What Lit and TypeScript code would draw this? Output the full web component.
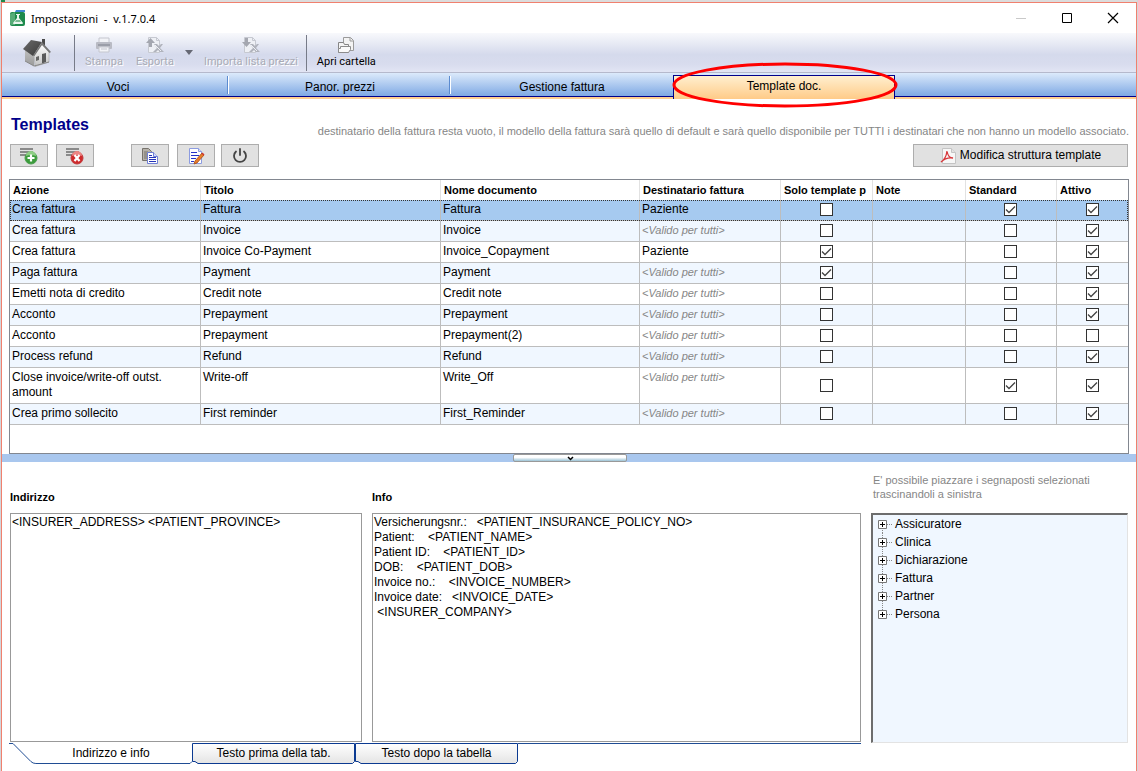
import { LitElement, html, css, svg } from "lit";
import { customElement, state } from "lit/decorators.js";

interface Row {
  action: string;
  title: string;
  doc: string;
  recipient?: string;
  only: boolean;
  standard: boolean;
  active: boolean;
}

const row = (action: string, title: string, doc: string, recipient: string, only = false, standard = false, active = true): Row =>
  ({ action, title, doc, recipient, only, standard, active });

const ROWS: Row[] = [
  row("Crea fattura", "Fattura", "Fattura", "Paziente", false, true),
  row("Crea fattura", "Invoice", "Invoice", ""),
  row("Crea fattura", "Invoice Co-Payment", "Invoice_Copayment", "Paziente", true),
  row("Paga fattura", "Payment", "Payment", "", true),
  row("Emetti nota di credito", "Credit note", "Credit note", ""),
  row("Acconto", "Prepayment", "Prepayment", ""),
  row("Acconto", "Prepayment", "Prepayment(2)", "", false, false, false),
  row("Process refund", "Refund", "Refund", ""),
  row("Close invoice/write-off outst. amount", "Write-off", "Write_Off", "", false, true),
  row("Crea primo sollecito", "First reminder", "First_Reminder", ""),
];

const INFO = [
  "Versicherungsnr.:   <PATIENT_INSURANCE_POLICY_NO>",
  "Patient:    <PATIENT_NAME>",
  "Patient ID:    <PATIENT_ID>",
  "DOB:    <PATIENT_DOB>",
  "Invoice no.:    <INVOICE_NUMBER>",
  "Invoice date:   <INVOICE_DATE>",
  " <INSURER_COMPANY>",
].join("\n");

const TABS = ["Voci", "Panor. prezzi", "Gestione fattura", "Template doc."];
const TREE = ["Assicuratore", "Clinica", "Dichiarazione", "Fattura", "Partner", "Persona"];

const appIcon = html`<svg width="16" height="16" viewBox="0 0 16 16" aria-hidden="true">
  <rect x="0" y="2" width="15" height="14" rx="2" fill="#1d8a4c"/>
  <path d="M5 2l1-2h9v2z" fill="#3f86cf"/>
  <path d="M0 4l5-2v13H2q-2 0-2-2z" fill="#56ab76"/>
  <path d="M6 4h4v1H9v3l4 5q0 1-1 1H4q-1 0-1-1l4-5V5H6z" fill="#e9f5ed"/>
  <path d="M6 10h4l1 2H5z" fill="#7dbb93"/>
</svg>`;

const house = html`<svg width="28" height="28" viewBox="0 0 28 28" aria-hidden="true">
  <defs>
    <linearGradient id="front" x1="0" y1="0" x2="0" y2="1"><stop offset="0" stop-color="#fff"/><stop offset="1" stop-color="#c2c2c2"/></linearGradient>
    <linearGradient id="side" x1="0" y1="0" x2="0" y2="1"><stop offset="0" stop-color="#bdbdbd"/><stop offset="1" stop-color="#9a9a9a"/></linearGradient>
    <linearGradient id="roof" x1="0" y1="0" x2="1" y2="1"><stop offset="0" stop-color="#6a6a6a"/><stop offset="1" stop-color="#3a3a3a"/></linearGradient>
  </defs>
  <path d="M19 0h3v8h-3z" fill="#4a4a4a"/>
  <path d="M2 11l9 5v11l-9-5z" fill="url(#side)"/>
  <path d="M11 15l8-10 7 8v10l-14 4.500z" fill="url(#front)" stroke="#9a9a9a" stroke-width=".5"/>
  <path d="M0 10L8 1l11 2-9 14z" fill="url(#roof)"/>
  <path d="M19 3l9 10-1.500 1L19 6l-7.500 11H10z" fill="#777"/>
  <path d="M19 15l4-1v9l-4 1.500z" fill="#5a5a5a"/>
  <path d="M13 18l3-1v4l-3 1z" fill="#666"/>
  <path d="M2 22l9 5 15-4" fill="none" stroke="#888"/>
</svg>`;

const printer = html`<svg width="18" height="16" viewBox="0 0 18 16" aria-hidden="true">
  <path d="M4 1h10v5H4z" fill="#f2f3f7" stroke="#c4c6ce"/>
  <rect x="1" y="5" width="16" height="7" rx="1" fill="#b9bbc4"/>
  <path d="M3 8h12" stroke="#9b9ea8" stroke-width="2"/>
  <path d="M4 10h10v5H4z" fill="#f2f3f7" stroke="#c4c6ce"/>
  <path d="M6 12h6" stroke="#c4c6ce"/>
</svg>`;

const sheet = (down: boolean) => html`<svg width="18" height="16" viewBox="0 0 18 16" aria-hidden="true">
  <path d="M2.500 .5h8l3 3v12h-11z" fill="#eef0f5" stroke="#c6c9d1"/>
  <path d="M10.500 .5v3h3" fill="none" stroke="#c6c9d1"/>
  ${down
    ? svg`<path d="M3 1h3v4h3L4.500 10 0 5h3z" fill="#a4a7b0"/>`
    : svg`<path d="M3 10h3V6h3L4.500 1 0 6h3z" fill="#a4a7b0"/>`}
  <path d="M8 7h3l2 2 2-2h2l-3 4 4 4h-4l-2-2-2 2H7l4-4z" fill="#b0b3bc"/>
  <path d="M9 8l6 6" stroke="#eef0f5"/>
</svg>`;

const folder = html`<svg width="18" height="16" viewBox="0 0 18 16" aria-hidden="true">
  <path d="M6.500 .5h7l3 3v10h-10z" fill="#f3f3f3" stroke="#9a9a9a"/>
  <path d="M13 1v3h3" fill="none" stroke="#9a9a9a"/>
  <path d="M1.500 5.500h5l1 2h4v8h-10z" fill="#f4f4f4" stroke="#858585"/>
  <path d="M3.500 9.500h10v3l-2 3h-10v-4h2z" fill="#fafafa" stroke="#8c8c8c"/>
</svg>`;

const listLines = svg`<path d="M0 2h13M0 5h13M0 8h8" stroke="#8a8a8a" stroke-width="2"/>`;
const addIcon = html`<svg width="18" height="18" viewBox="0 0 18 18" aria-hidden="true">
  ${listLines}<circle cx="11" cy="11" r="6" fill="#3c9c3c" stroke="#4a9d4c"/>
  <path d="M6 9a5 5 0 0 1 10 0q-5-2-10 0" fill="#8fce86"/>
  <path d="M11 7.500v7M7.500 11h7" stroke="#fff" stroke-width="2.200"/>
</svg>`;
const deleteIcon = html`<svg width="18" height="18" viewBox="0 0 18 18" aria-hidden="true">
  ${listLines}<circle cx="11" cy="11" r="6" fill="#cf2a2c" stroke="#c0393b"/>
  <path d="M6 9a5 5 0 0 1 10 0q-5-2-10 0" fill="#ec8583"/>
  <path d="M8.500 8l5 6M13.500 8l-5 6" stroke="#fff" stroke-width="2.200"/>
</svg>`;
const copyIcon = html`<svg width="18" height="18" viewBox="0 0 18 18" aria-hidden="true">
  <path d="M1.500 1.500h6l3 3v9h-9z" fill="#b5b1a9" stroke="#77736c"/>
  <path d="M3 5h4M3 7h4M3 9h4M3 11h4" stroke="#77736c"/>
  <path d="M6.500 5.500h6l4 4v7h-10z" fill="#fff" stroke="#6f7fd4"/>
  <path d="M12.500 5.500v4h4" fill="#d8defa" stroke="#6f7fd4"/>
  <path d="M8 8.500h3M8 10.500h7M8 12.500h7M8 14.500h7" stroke="#2633b8"/>
</svg>`;
const editIcon = html`<svg width="18" height="18" viewBox="0 0 18 18" aria-hidden="true">
  <path d="M2.500 1.500h9l3 3v12h-12z" fill="#fff" stroke="#8c9be0"/>
  <path d="M11.500 1.500v3h3" fill="#d8defa" stroke="#8c9be0"/>
  <path d="M4 5.500h6M4 8.500h8M4 11.500h5M4 14.500h3" stroke="#2633c8"/>
  <path d="M15 6l2 2-7 8-3 1 1-3z" fill="#e87d2a" stroke="#a34a17" stroke-width=".8"/>
  <path d="M14.500 6.500l1-1 2 2-1 1z" fill="#c33"/>
</svg>`;
const powerIcon = html`<svg width="18" height="18" viewBox="0 0 18 18" aria-hidden="true">
  <path d="M5 4.500a6 6 0 1 0 8 0M9 2v6" fill="none" stroke="#444" stroke-width="1.800" stroke-linecap="round"/>
</svg>`;
const pdfIcon = html`<svg width="16" height="16" viewBox="0 0 16 16" aria-hidden="true">
  <path d="M2.500 .5h9l4 4v11h-13z" fill="#f7f7f7" stroke="#c4c4c4"/>
  <path d="M11.500 .5v4h4" fill="#e2e2e2" stroke="#c4c4c4"/>
  <path d="M1 14q5-3 6-11 1 7 6 7-7-1-12 4z" fill="none" stroke="#d7383c" stroke-width="1.300"/>
</svg>`;

@customElement("app-root")
export class AppRoot extends LitElement {
  @state() private rows = ROWS;
  @state() private selected = 0;

  static styles = css`
    :host {
      display: block;
      font-family: "Liberation Sans", Arial, sans-serif;
      font-size: 12px;
      line-height: 15px;
      color: #000;
    }
    *, *::before, *::after { box-sizing: border-box; }
    svg { display: block; flex: none; }
    button, textarea { font: inherit; color: inherit; margin: 0; border-radius: 0; }
    .screen {
      min-height: 100vh;
      display: flex;
      flex-direction: column;
      padding: 0 1px;
      background: #d4d6da;
    }
    .behind {
      height: 2px;
      background: linear-gradient(90deg, #1d8a4c 4px, #dcdcdc 4px);
    }
    .window {
      flex: 1;
      display: flex;
      flex-direction: column;
      background: #fff;
      border: 1px solid #f0806e;
      border-bottom: 0;
    }
    .titlebar {
      display: flex;
      align-items: center;
      height: 30px;
      padding: 0 17px 0 8px;
      gap: 5px;
      font-family: "Noto Sans", "Open Sans", sans-serif;
    }
    .titlebar h1 { flex: 1; margin: 0; font-size: 11px; font-weight: 400; white-space: pre; }
    .winbuttons { display: flex; gap: 34px; }
    .winbuttons button { border: 0; padding: 0; background: none; }
    .toolbar {
      display: flex;
      align-items: center;
      height: 40px;
      padding-left: 21px;
      background: linear-gradient(#f8f9fc, #d5daec 55%, #d8dcee 80%, #e2e5f4);
      border-bottom: 1px solid #b5b9cc;
    }
    .tool {
      display: flex;
      flex-direction: column;
      align-items: center;
      gap: 1px;
      padding: 0;
      border: 0;
      background: none;
      font-family: Roboto, sans-serif;
      font-size: 11px;
      white-space: nowrap;
    }
    .tool:disabled { color: #a9abb5; text-shadow: 1px 1px 0 #fff; }
    .sep { width: 1px; height: 36px; background: #777b88; }
    .home { margin-right: 23px; }
    .print { margin: 0 13px 0 10px; }
    .arrow { border: 0; padding: 0; background: none; margin: 0 11px; }
    .import { margin-right: 8px; }
    .open { margin-left: 10px; }
    .tabs {
      display: flex;
      height: 26px;
      padding-left: 5px;
      background: linear-gradient(#dceafb, #7fa9e4 23px, #00008b 23px, #00008b 24px, #ffcf8f 24px);
    }
    .tab {
      position: relative;
      flex: 0 1 222px;
      padding: 2px 0 0;
      border: 0;
      background: none;
    }
    .tab.divided::after {
      content: "";
      position: absolute;
      right: 0;
      top: 3px;
      height: 18px;
      width: 2px;
      background: linear-gradient(90deg, #5b8bd0 50%, #fff 50%);
    }
    .tab.active {
      margin-top: 2px;
      padding: 0 0 2px;
      border: 1px solid #00008b;
      border-bottom: 0;
      background: linear-gradient(#ffefcf, #ffcb88);
    }
    .ring {
      position: absolute;
      left: -1px;
      top: -14px;
      width: calc(100% + 4px);
      height: 46px;
      overflow: visible;
      pointer-events: none;
    }
    .main { display: flex; flex-direction: column; padding: 17px 7px 0; }
    .heading { display: flex; justify-content: space-between; gap: 16px; padding-left: 2px; }
    .heading h2 { margin: 0; font-size: 16px; line-height: 18px; color: #00008b; }
    .hint { margin: 0; font-size: 11px; line-height: 14px; color: #868686; }
    .heading .hint { padding-top: 8px; white-space: nowrap; }
    .actions { display: flex; padding: 6px 1px 12px; align-items: center; }
    .actions button {
      display: flex;
      align-items: center;
      justify-content: center;
      gap: 4px;
      height: 23px;
      width: 38px;
      padding: 0;
      border: 1px solid #adadad;
      background: #e1e1e1;
    }
    .actions .gap-s { margin-left: 8px; }
    .actions .gap-m { margin-left: 37px; }
    .actions .gap-t { margin-left: 6px; }
    .actions .wide { width: 215px; margin-left: auto; }
    .gridbox { border: 1px solid #828790; padding-bottom: 28px; }
    table { width: 100%; border-collapse: separate; border-spacing: 0; table-layout: fixed; }
    th {
      height: 20px;
      padding: 0 3px;
      text-align: left;
      font-size: 11px;
      border-right: 1px solid #e2e2e2;
      white-space: nowrap;
    }
    td {
      padding: 2px;
      padding-bottom: 3px;
      vertical-align: top;
      border-right: 1px solid #bdbdbd;
      border-bottom: 1px solid #bdbdbd;
    }
    th:last-child, td:last-child { border-right: 0; }
    .odd { background: #f0f7ff; }
    .picked { background: #a6caf0; outline: 1px dotted #333; outline-offset: -1px; }
    .all { color: #868686; font-size: 11px; font-style: italic; }
    .check { text-align: center; vertical-align: middle; line-height: 0; }
    .check input {
      appearance: none;
      width: 13px;
      height: 13px;
      margin: 0;
      border: 1px solid #333;
      background: #fff;
    }
    .check input:checked {
      background: url("data:image/svg+xml,%3Csvg xmlns='http://www.w3.org/2000/svg' viewBox='0 0 11 11'%3E%3Cpath d='M1 5.500l3 3 6-6' fill='none' stroke='%23444' stroke-width='1.300'/%3E%3C/svg%3E") #fff;
    }
    .splitter { display: flex; justify-content: center; height: 8px; padding-left: 2px; background: #a9c7ee; }
    .grip {
      display: flex;
      justify-content: center;
      width: 114px;
      height: 8px;
      padding: 1px 0 0;
      border: 1px solid #999;
      border-radius: 2px;
      background: linear-gradient(#fff 40%, #9cc3d6);
    }
    .lower {
      flex: 1;
      display: grid;
      grid-template-columns: 352fr 489fr 257fr;
      grid-template-rows: 51px 1fr;
      column-gap: 10px;
      padding: 0 8px;
    }
    .caption { align-self: end; padding-bottom: 8px; font-size: 11px; font-weight: 700; }
    .lower .hint { align-self: end; padding: 0 0 12px 2px; }
    textarea {
      width: 100%;
      min-height: 120px;
      padding: 1px;
      border: 1px solid #999;
      background: #fff;
      resize: none;
      outline: 0;
      display: block;
    }
    .tree {
      margin: 0 0 -1px;
      padding: 0 0 0 5px;
      list-style: none;
      background: #f0f7ff;
      border: 2px solid #6d6d6d;
      border-right: 1px solid #e3e3e3;
      border-bottom: 1px solid #e3e3e3;
    }
    .tree button { display: flex; align-items: center; gap: 3px; height: 18px; padding: 0; border: 0; background: none; }
    .sheets { display: flex; margin-right: 275px; padding-left: 7px; height: 29px; }
    .sheet { position: relative; height: 21px; margin-top: 1px; padding: 0; border: 0; background: none; }
    .sheet svg { position: absolute; inset: 0; width: 100%; height: 100%; overflow: visible; }
    .sheet span { position: relative; }
    .first { flex: 0 1 183px; padding-left: 21px; }
    .next { flex: 0 1 163px; }
    .fill { flex: 1; margin-top: 1px; border-top: 1px solid #1f4c94; }
  `;

  private toggle(i: number, key: "only" | "standard" | "active") {
    this.rows = this.rows.map((r, n) => (n === i ? { ...r, [key]: !r[key] } : r));
  }

  private box(r: Row, i: number, key: "only" | "standard" | "active", label: string) {
    return html`<td class="check"><input type="checkbox" aria-label=${`${label}: ${r.title}`} .checked=${r[key]} @change=${() => this.toggle(i, key)}></td>`;
  }

  render() {
    return html`<div class="screen">
      <div class="behind"></div>
      <div class="window">
        <header class="titlebar">
          ${appIcon}
          <h1>Impostazioni  -  v.1.7.0.4</h1>
          <div class="winbuttons">
            <button aria-label="Riduci"><svg width="12" height="12"><path d="M1 6.500h10" stroke="#c9c9c9"/></svg></button>
            <button aria-label="Ingrandisci"><svg width="12" height="12"><path d="M1.500 1.500h9v9h-9z" fill="none" stroke="#000"/></svg></button>
            <button aria-label="Chiudi"><svg width="12" height="12"><path d="M1 1l10 10M11 1L1 11" stroke="#000" stroke-width="1.200"/></svg></button>
          </div>
        </header>
        <nav class="toolbar">
          <button class="tool home" aria-label="Home">${house}</button>
          <div class="sep"></div>
          <button class="tool print" disabled>${printer}Stampa</button>
          <button class="tool" disabled>${sheet(false)}Esporta</button>
          <button class="arrow" aria-label="Opzioni di esportazione"><svg width="8" height="5"><path d="M0 0h8L4 5z" fill="#666975"/></svg></button>
          <button class="tool import" disabled>${sheet(true)}Importa lista prezzi</button>
          <div class="sep"></div>
          <button class="tool open">${folder}Apri cartella</button>
        </nav>
        <nav class="tabs">
          ${TABS.map((t, i) => html`<button class="tab ${i === 3 ? "active" : i < 2 ? "divided" : ""}">${t}${i === 3
            ? html`<svg class="ring" viewBox="0 0 224 46" preserveAspectRatio="none" aria-hidden="true"><ellipse cx="112" cy="23" rx="111" ry="21" fill="none" stroke="#f00" stroke-width="3"/></svg>`
            : ""}</button>`)}
        </nav>
        <section class="main">
          <div class="heading">
            <h2>Templates</h2>
            <p class="hint">destinatario della fattura resta vuoto, il modello della fattura sarà quello di default e sarà quello disponibile per TUTTI i destinatari che non hanno un modello associato.</p>
          </div>
          <div class="actions">
            <button aria-label="Aggiungi">${addIcon}</button>
            <button class="gap-s" aria-label="Elimina">${deleteIcon}</button>
            <button class="gap-m" aria-label="Copia">${copyIcon}</button>
            <button class="gap-s" aria-label="Modifica">${editIcon}</button>
            <button class="gap-t" aria-label="Attiva o disattiva">${powerIcon}</button>
            <button class="wide">${pdfIcon}Modifica struttura template</button>
          </div>
          <div class="gridbox">
            <table>
              <colgroup>
                ${[191, 240, 199, 141, 92, 93, 91, 71].map((w) => html`<col style="width:${(w / 1118) * 100}%">`)}
              </colgroup>
              <thead><tr>
                ${["Azione", "Titolo", "Nome documento", "Destinatario fattura", "Solo template p", "Note", "Standard", "Attivo"].map((h) => html`<th scope="col">${h}</th>`)}
              </tr></thead>
              <tbody>
                ${this.rows.map((r, i) => html`<tr class=${i === this.selected ? "picked" : i % 2 ? "odd" : ""} @click=${() => (this.selected = i)}>
                  <td>${r.action}</td><td>${r.title}</td><td>${r.doc}</td>
                  <td class=${r.recipient ? "" : "all"}>${r.recipient || "<Valido per tutti>"}</td>
                  ${this.box(r, i, "only", "Solo template")}
                  <td></td>
                  ${this.box(r, i, "standard", "Standard")}
                  ${this.box(r, i, "active", "Attivo")}
                </tr>`)}
              </tbody>
            </table>
          </div>
        </section>
        <div class="splitter"><button class="grip" aria-label="Comprimi"><svg width="7" height="5"><path d="M1 1l2.500 2.500L6 1" fill="none" stroke="#000" stroke-width="1.500"/></svg></button></div>
        <section class="lower">
          <label class="caption" for="address">Indirizzo</label>
          <label class="caption" for="info">Info</label>
          <p class="hint">E' possibile piazzare i segnaposti selezionati trascinandoli a sinistra</p>
          <textarea id="address" .value=${"<INSURER_ADDRESS> <PATIENT_PROVINCE>"}></textarea>
          <textarea id="info" .value=${INFO}></textarea>
          <ul class="tree">
            ${TREE.map((t, i) => html`<li><button>
              <svg width="14" height="18" aria-hidden="true">
                <path d="M4.500 ${i ? 0 : 9}V${i < TREE.length - 1 ? 18 : 9}M9 9.500h5" stroke="#888" stroke-dasharray="1 1"/>
                <path d="M.5 5.500h8v8h-8z" fill="#fff" stroke="#777"/>
                <path d="M2 9.500h5M4.500 7v5" stroke="#000"/>
              </svg>${t}</button></li>`)}
          </ul>
        </section>
        <nav class="sheets">
          <button class="sheet first"><svg viewBox="0 0 184 21" preserveAspectRatio="none" aria-hidden="true"><path d="M0 .5h4l18 18q2 2 5 2h155l2-2" fill="none" stroke="#1f4c94"/></svg><span>Indirizzo e info</span></button>
          ${["Testo prima della tab.", "Testo dopo la tabella"].map((t) => html`<button class="sheet next"><svg viewBox="0 0 163 21" preserveAspectRatio="none" aria-hidden="true">
            <defs><linearGradient id="face" x1="0" y1="0" x2="0" y2="1"><stop offset="0" stop-color="#fff"/><stop offset="1" stop-color="#e4e4e4"/></linearGradient></defs>
            <path d="M.5 .5h162v18l-2 2H6l-3-2H.5z" fill="url(#face)" stroke="#0b3a91"/></svg><span>${t}</span></button>`)}
          <div class="fill"></div>
        </nav>
      </div>
    </div>`;
  }
}
